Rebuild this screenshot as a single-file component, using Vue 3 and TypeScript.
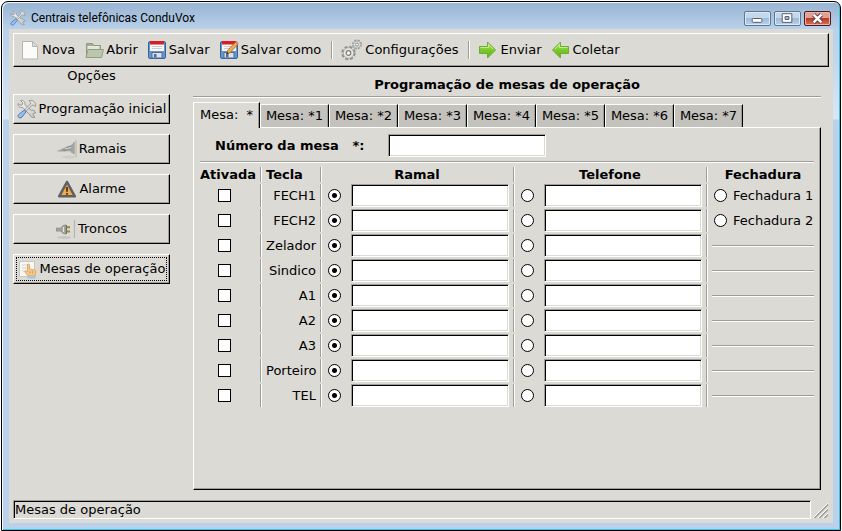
<script setup lang="ts">
import { ref, reactive } from 'vue'

interface Row {
  key: string
  active: boolean
  target: string
  extension: string
  phone: string
  lock?: string
}

const sections = [
  { icon: 'tools', label: 'Programação inicial' },
  { icon: 'jack', label: 'Ramais' },
  { icon: 'alarm', label: 'Alarme' },
  { icon: 'plug', label: 'Troncos' },
  { icon: 'desk', label: 'Mesas de operação' },
]
const section = ref('Mesas de operação')

const tabs = ['Mesa:\u00a0 *', 'Mesa: *1', 'Mesa: *2', 'Mesa: *3', 'Mesa: *4', 'Mesa: *5', 'Mesa: *6', 'Mesa: *7']
const tab = ref(0)
const deskNumber = ref('')

const keys = ['FECH1', 'FECH2', 'Zelador', 'Sindico', 'A1', 'A2', 'A3', 'Porteiro', 'TEL']
const rows = reactive<Row[]>(
  keys.map((key, i) => ({
    key,
    active: false,
    target: 'extension',
    extension: '',
    phone: '',
    lock: i < 2 ? `Fechadura ${i + 1}` : undefined,
  })),
)
</script>

<template>
  <div class="desktop">
    <svg class="defs" aria-hidden="true">
      <defs>
        <linearGradient id="green" x1="0" y1="0" x2="0" y2="1">
          <stop offset="0" stop-color="#b4e86a" />
          <stop offset=".5" stop-color="#7cc92e" />
          <stop offset="1" stop-color="#5fae1c" />
        </linearGradient>
        <linearGradient id="steel" x1="0" y1="0" x2="1" y2="1">
          <stop offset="0" stop-color="#fafafa" />
          <stop offset="1" stop-color="#c6c7c5" />
        </linearGradient>
        <symbol id="tools" viewBox="0 0 20 20">
          <path d="M3.500 1.500 6 4 5 6 3 6.200 1 4.600C.8 7.300 3 9 5.600 8.400L13 16c.8 2.200 3 3.200 5 2.200l-2-2.200.6-1.700 2-.3c-.4-2-2.200-3.200-4.300-2.700L7.800 5.500C8.300 3 6.300.8 3.500 1.500z" fill="url(#steel)" stroke="#8f918f" stroke-width=".9" />
          <path d="M12 1.800c2 .8 2 2 1.400 3.200L8 10.400l1.400 1.400L15 6.400c1.200-.4 2.500 0 3.200 1.100C19 5 18.200 3.600 16.900 2.500 15.500 1.300 13.500 1 12 1.800z" fill="url(#steel)" stroke="#8f918f" stroke-width=".9" />
          <path d="m7.200 11.200 1.800 1.700-4 5.200c-1.300 1.300-3.200.9-3.700-.1-.6-1.200 0-2.300 1.200-3.200z" fill="#9dbdea" stroke="#4c7abd" />
        </symbol>
        <symbol id="new" viewBox="0 0 20 20">
          <path d="M2.500 1.500h10l5 5v12.500h-15z" fill="#fbfbfa" stroke="#b5b5b1" />
          <path d="M12.500 1.500v5h5z" fill="#dededb" stroke="#b5b5b1" />
        </symbol>
        <symbol id="open" viewBox="0 0 20 20">
          <path d="M2.500 16.500v-13h6l1.500 2h6.500v11z" fill="#a5ae96" stroke="#8f997f" />
          <path d="M3.500 6h12v8h-12z" fill="#e4e8dc" />
          <path d="M4 9.500h15.500l-2 8H2z" fill="#bcc6ab" stroke="#939d84" />
        </symbol>
        <symbol id="save" viewBox="0 0 20 20">
          <rect x="1.500" y="1.500" width="17" height="17" rx="1.500" fill="#6595cf" stroke="#38639d" />
          <path d="M3 1h14v10H3z" fill="#f8f8f8" />
          <path d="M3 1h14v3.500H3z" fill="#d81e25" />
          <path d="M5 6.500h10M5 8.500h10" stroke="#cccdd0" />
          <path d="M5 12.500h10v5.500H5z" fill="#dde0e4" stroke="#4a6d9f" />
          <path d="M7 14h2.500v3.500H7z" fill="#4b6d9d" />
        </symbol>
        <symbol id="saveas" viewBox="0 0 20 20">
          <use href="#save" />
          <path d="m8.500 10.500 7.800-8.200 2.500 2.200-8 8.400-3.400 1.300z" fill="#efad4e" stroke="#9d672a" stroke-width=".8" />
          <path d="m16.300 2.300 1.200-1.200 2.300 2.100-1 1.300z" fill="#ee8c87" />
          <path d="m7.200 14.400 1-2.700 1.800 1.600z" fill="#403a32" />
        </symbol>
        <symbol id="gears" viewBox="0 0 22 22">
          <circle cx="16" cy="5.500" r="4.200" fill="#e6e6e3" stroke="#9a9c98" stroke-width="1.600" stroke-dasharray="2.200 1.100" />
          <circle cx="16" cy="5.500" r="3.600" fill="#dfdfdc" stroke="#a4a6a2" stroke-width=".8" />
          <circle cx="16" cy="5.500" r="1.500" fill="#f7f7f5" stroke="#8d8f8b" />
          <circle cx="7.500" cy="14" r="6.200" fill="#e6e6e3" stroke="#8d8f8b" stroke-width="2" stroke-dasharray="3.100 1.770" />
          <circle cx="7.500" cy="14" r="5.300" fill="#e6e6e3" stroke="#a0a29e" stroke-width=".9" />
          <circle cx="7.500" cy="14" r="2.300" fill="#f7f7f5" stroke="#7d7f7b" stroke-width="1.200" />
        </symbol>
        <symbol id="right" viewBox="0 0 20 20">
          <path d="M1.500 6.500h8v-4.500L17.500 10l-8 8v-4.500h-8z" fill="url(#green)" stroke="#69b02f" />
          <path d="M2.500 7.500h8v-3l4.500 4.500" fill="none" stroke="#d0f39d" stroke-opacity=".8" />
        </symbol>
        <symbol id="left" viewBox="0 0 20 20">
          <path d="M17.500 6.500h-8v-4.500L1.500 10l8 8v-4.500h8z" fill="url(#green)" stroke="#69b02f" />
          <path d="M16.500 7.500h-8v-3L4 9" fill="none" stroke="#d0f39d" stroke-opacity=".8" />
        </symbol>
        <symbol id="jack" viewBox="0 0 20 20">
          <ellipse cx="12" cy="18" rx="7" ry="1.500" fill="#cfcdc8" />
          <path d="M0 12 8 8.500l5-1.500 3.500-3v11l-4-2.500H1z" fill="#a2a4a2" />
          <path d="m8 10 6-1.500M9 12h5" stroke="#dededc" />
          <path d="m9 8.500 5-1.500M6 11h8" stroke="#777977" stroke-width=".8" />
          <path d="M19 1v17" stroke="#b1b3b1" />
          <path d="M17 3v12" stroke="#868886" />
        </symbol>
        <symbol id="alarm" viewBox="0 0 20 20">
          <path d="M10 3 17.800 17.300H2.200z" fill="#f4a94a" stroke="#5f6064" stroke-width="2.600" stroke-linejoin="round" />
          <path d="M10 8v4.800M10 14v1.700" stroke="#4b3517" stroke-width="1.800" />
        </symbol>
        <symbol id="plug" viewBox="0 0 20 20">
          <ellipse cx="8" cy="18.500" rx="7" ry="1.300" fill="#c6c4bf" />
          <path d="M0 9.200h5C6 7 7.500 6 10 6v9c-2.500 0-4-1-5-3H0z" fill="#a4a6a4" stroke="#858785" stroke-width=".8" />
          <path d="M7.500 8v5" stroke="#e5e5e3" />
          <path d="M10.500 8.200H14M10.500 12.600H14" stroke="#a08a25" stroke-width="2" />
          <path d="M10.500 6v9" stroke="#6f706e" />
          <path d="M18.500 1v18" stroke="#b4b6b4" stroke-width="1.200" />
        </symbol>
        <symbol id="desk" viewBox="0 0 20 20">
          <path d="M1.500 2.500h15v15h-15z" fill="#f7f7f3" stroke="#c8c8c2" />
          <path d="M4 6h8M4 9h5M4 12h4" stroke="#d3d3cd" />
          <path d="M9.500 5.200c1.500-.6 2 .3 2 1.300V10l5 1c1 .3 1.400 1 1.200 2l-.8 4H10l-3-4c-.3-1.300 1-1.600 2.500-.4z" fill="#f7c98b" stroke="#d89c55" stroke-width=".8" />
          <path d="M12 12v2.500M14.500 12v2.500" stroke="#d89c55" />
          <path d="M9.500 17h8v2.500h-8z" fill="#a8c4e8" />
        </symbol>
      </defs>
    </svg>

    <div class="window">
      <header class="titlebar">
        <svg class="title-icon" aria-hidden="true"><use href="#tools" /></svg>
        <span class="title">Centrais telefônicas ConduVox</span>
        <button class="caption" type="button" aria-label="Minimizar">
          <svg viewBox="0 0 26 13"><rect x="7.500" y="6.500" width="10" height="4" rx="1" fill="#fff" stroke="#53596b" /></svg>
        </button>
        <button class="caption" type="button" aria-label="Maximizar">
          <svg viewBox="0 0 26 13">
            <path d="M7.500 1.500h10v9h-10z" fill="#fff" stroke="#53596b" />
            <path d="M10.500 4.500h4v3h-4z" fill="#9dbbd9" stroke="#53596b" />
          </svg>
        </button>
        <button class="caption close" type="button" aria-label="Fechar">
          <svg viewBox="0 0 26 13">
            <path d="m9 2.500 8 8m0-8-8 8" stroke="#5a4050" stroke-width="4.500" />
            <path d="m9 2.500 8 8m0-8-8 8" stroke="#fff" stroke-width="2.500" />
          </svg>
        </button>
      </header>

      <div class="client">
        <nav class="toolbar" aria-label="Ferramentas">
          <button type="button"><svg><use href="#new" /></svg>Nova</button>
          <button type="button"><svg><use href="#open" /></svg>Abrir</button>
          <button type="button"><svg><use href="#save" /></svg>Salvar</button>
          <button type="button"><svg><use href="#saveas" /></svg>Salvar como</button>
          <span class="divider"></span>
          <button type="button"><svg class="wide"><use href="#gears" /></svg>Configurações</button>
          <span class="divider"></span>
          <button type="button"><svg><use href="#right" /></svg>Enviar</button>
          <button type="button"><svg><use href="#left" /></svg>Coletar</button>
        </nav>

        <div class="body">
          <aside class="sidebar">
            <div class="sidebar-title">Opções</div>
            <button
              v-for="s in sections"
              :key="s.label"
              type="button"
              :class="{ current: s.label === section }"
              @click="section = s.label"
            >
              <svg aria-hidden="true"><use :href="'#' + s.icon" /></svg>{{ s.label }}
            </button>
          </aside>

          <main class="main">
            <h1>Programação de mesas de operação</h1>
            <hr />
            <div class="tabs" role="tablist">
              <button
                v-for="(t, i) in tabs"
                :key="t"
                type="button"
                role="tab"
                :aria-selected="i === tab"
                :class="{ selected: i === tab }"
                @click="tab = i"
              >{{ t }}</button>
            </div>
            <section class="panel" role="tabpanel">
              <div class="number">
                <label for="desk-number">Número da mesa&nbsp;&nbsp; *:</label>
                <input id="desk-number" v-model="deskNumber" class="field" type="text" />
              </div>
              <hr />
              <table>
                <colgroup>
                  <col class="c-active" />
                  <col class="c-key" />
                  <col />
                  <col />
                  <col class="c-lock" />
                </colgroup>
                <thead>
                  <tr>
                    <th class="active">Ativada</th>
                    <th class="key">Tecla</th>
                    <th>Ramal</th>
                    <th>Telefone</th>
                    <th class="lock">Fechadura</th>
                  </tr>
                </thead>
                <tbody>
                  <tr v-for="(r, i) in rows" :key="r.key">
                    <td class="active">
                      <input :id="'active-' + i" v-model="r.active" type="checkbox" :aria-label="'Ativada ' + r.key" />
                    </td>
                    <td class="key"><label :for="'active-' + i">{{ r.key }}</label></td>
                    <td>
                      <div class="choice">
                        <input v-model="r.target" type="radio" :name="'target-' + i" value="extension" :aria-label="'Ramal ' + r.key" />
                        <input v-model="r.extension" class="field" type="text" :aria-label="'Número do ramal ' + r.key" />
                      </div>
                    </td>
                    <td>
                      <div class="choice">
                        <input v-model="r.target" type="radio" :name="'target-' + i" value="phone" :aria-label="'Telefone ' + r.key" />
                        <input v-model="r.phone" class="field" type="text" :aria-label="'Número de telefone ' + r.key" />
                      </div>
                    </td>
                    <td class="lock">
                      <label v-if="r.lock" class="lock-label">
                        <input v-model="r.target" type="radio" :name="'target-' + i" value="lock" />{{ r.lock }}
                      </label>
                      <hr v-else />
                    </td>
                  </tr>
                </tbody>
              </table>
            </section>
          </main>
        </div>

        <footer class="status">
          <div class="status-text">Mesas de operação</div>
          <svg class="grip" viewBox="0 0 18 18" aria-hidden="true">
            <path d="M2 17 17 2M7 17 17 7M12 17l5-5" stroke="#fff" />
            <path d="M3 17 17 3M4 17 17 4M8 17l9-9M9 17l8-8M13 17l4-4M14 17l3-3" stroke="#a19f99" />
          </svg>
        </footer>
      </div>
    </div>
  </div>
</template>

<style>
body {
  margin: 0;
  background: #fff;
}
</style>

<style scoped>
* {
  box-sizing: border-box;
}
.desktop {
  min-height: 100vh;
  padding: 1px 1px 0;
  display: flex;
  font: 13px/16px "DejaVu Sans", sans-serif;
  color: #000;
}
.defs {
  position: absolute;
  width: 0;
  height: 0;
}
.window {
  flex: 1;
  display: flex;
  flex-direction: column;
  border: 1px solid #000;
  border-radius: 7px 7px 0 0;
  box-shadow: inset 1px 1px #f4f9fd, inset -1px -1px #37c4e4;
  padding: 1px 7px 7px;
  background: linear-gradient(#98b4d2 0, #b9d1ea 27px, #b9d1ea 36px, #dae7f5 117px, #b9d1ea 118px);
}
.titlebar {
  height: 26px;
  display: flex;
  align-items: center;
  gap: 3px;
  padding: 4px 2px 0 1px;
}
.title-icon {
  width: 16px;
  height: 16px;
}
.title {
  flex: 1;
  margin-left: 2px;
  font: 12px/16px Roboto, sans-serif;
}
.caption {
  width: 27px;
  height: 15px;
  padding: 0;
  border: 1px solid #5e7591;
  border-radius: 2px;
  background: linear-gradient(#c5d8eb 50%, #9dbad8 50%, #b9d3ec);
  box-shadow: inset 0 0 0 1px #dce9f5;
}
.caption svg {
  display: block;
  width: 100%;
  height: 100%;
}
.close {
  border-color: #4d1820;
  background: linear-gradient(#e1a092 45%, #b83a22 50%, #d4765a);
  box-shadow: inset 0 0 0 1px #e9b3a6;
}
.client {
  flex: 1;
  display: flex;
  flex-direction: column;
  padding: 4px;
  background: #dcdad5;
}
button {
  font: inherit;
  color: inherit;
}
.toolbar {
  height: 34px;
  display: flex;
  align-items: center;
  gap: 9px;
  padding: 0 6px;
  border: 1px solid;
  border-color: #fff #000 #000 #fff;
  box-shadow: inset -1px -1px #9f9d97;
}
.toolbar button {
  display: flex;
  align-items: center;
  gap: 2px;
  padding: 0;
  border: 0;
  background: none;
  white-space: nowrap;
}
.toolbar svg,
.sidebar svg {
  width: 20px;
  height: 20px;
  flex: none;
}
.toolbar svg.wide {
  width: 22px;
  height: 22px;
}
.divider {
  width: 2px;
  height: 18px;
  margin: 0 -1px 0 1px;
  border-left: 1px solid #9f9d97;
  background: #fff;
}
.body {
  flex: 1;
  display: flex;
  gap: 23px;
}
.sidebar {
  width: 157px;
  display: flex;
  flex-direction: column;
  gap: 10px;
}
.sidebar-title {
  line-height: 17px;
  text-align: center;
}
.sidebar button {
  height: 30px;
  display: flex;
  align-items: center;
  justify-content: center;
  gap: 2px;
  padding: 0;
  border: 1px solid;
  border-color: #fff #000 #000 #fff;
  box-shadow: inset -1px -1px #9f9d97;
  background: none;
  white-space: nowrap;
}
.sidebar .current {
  outline: 1px dotted #000;
  outline-offset: -4px;
}
.main {
  flex: 1;
  display: flex;
  flex-direction: column;
  margin-right: 8px;
}
h1 {
  margin: 0;
  padding: 10px 0 3px;
  font-size: 13px;
  line-height: 16px;
  text-align: center;
}
hr {
  width: 100%;
  height: 2px;
  margin: 0;
  border: 0;
  border-top: 1px solid #9f9d97;
  background: #fff;
}
.tabs {
  display: flex;
  align-items: flex-end;
  padding-top: 4px;
}
.tabs button {
  height: 23px;
  width: 69px;
  padding: 0;
  border: 1px solid;
  border-color: #fff #000 transparent #fff;
  border-bottom: 0;
  box-shadow: inset -1px 0 #9f9d97;
  background: #c4c2bd;
  white-space: nowrap;
}
.tabs .selected {
  position: relative;
  width: 67px;
  height: 26px;
  margin-bottom: -1px;
  padding-bottom: 2px;
  background: #dcdad5;
}
.panel {
  flex: 1;
  padding: 6px;
  border: 1px solid;
  border-color: #fff #000 #000 #fff;
  box-shadow: inset -1px -1px #9f9d97;
}
.number {
  display: flex;
  align-items: center;
  gap: 24px;
  margin-bottom: 4px;
  padding-left: 15px;
  font-weight: bold;
}
.number .field {
  width: 158px;
}
.field {
  height: 23px;
  min-width: 0;
  padding: 0 4px;
  border: 1px solid;
  border-color: #9f9d97 #fff #fff #9f9d97;
  box-shadow: inset 1px 1px #000, inset -1px -1px #dcdad5;
  background: #fff;
  font: inherit;
  font-weight: normal;
  outline: 0;
}
table {
  width: 100%;
  margin-top: 2px;
  table-layout: fixed;
  border-collapse: separate;
  border-spacing: 0 2px;
}
.c-active,
.c-key {
  width: 60px;
}
.c-lock {
  width: 108px;
}
th,
td {
  height: 23px;
  padding: 0;
  border-left: 1px solid #9f9d97;
  box-shadow: inset 1px 0 #fff;
  white-space: nowrap;
}
th {
  height: 15px;
  line-height: 15px;
}
.active {
  border-left: 0;
  box-shadow: none;
  padding-right: 11px;
  text-align: center;
}
th.active,
th.key {
  padding-right: 0;
  text-align: left;
}
.key {
  padding: 0 4px 0 5px;
  text-align: right;
}
.lock {
  padding-left: 5px;
}
.choice {
  display: flex;
  align-items: center;
  gap: 10px;
  padding: 0 4px 0 7px;
}
.choice .field {
  flex: 1;
}
.lock-label {
  display: flex;
  align-items: center;
  gap: 6px;
  padding-left: 2px;
}
input[type="checkbox"],
input[type="radio"] {
  appearance: none;
  width: 13px;
  height: 13px;
  flex: none;
  margin: 0;
  border: 1px solid #000;
  background: #fff;
}
input[type="checkbox"] {
  display: block;
  margin: 0 auto;
}
input[type="checkbox"]:checked {
  background: linear-gradient(#000, #000) center / 7px 7px no-repeat #fff;
}
input[type="radio"] {
  border-radius: 50%;
}
input[type="radio"]:checked {
  background: radial-gradient(circle, #000 2px, #fff 3px);
}
.status {
  display: flex;
  align-items: flex-end;
  margin-top: 10px;
}
.status-text {
  flex: 1;
  height: 19px;
  padding-left: 1px;
  line-height: 18px;
  border: 1px solid;
  border-color: #9f9d97 #fff #fff #9f9d97;
  box-shadow: inset 1px 1px #000;
}
.grip {
  width: 18px;
  height: 18px;
}
</style>
